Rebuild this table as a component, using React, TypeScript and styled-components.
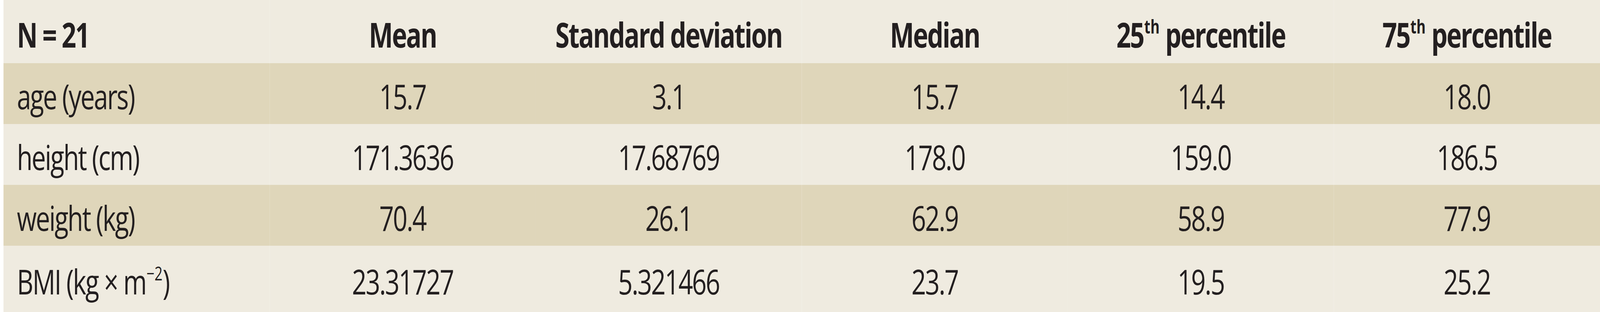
import { useEffect, useState } from "react";
import type { ReactNode } from "react";
import styled, { createGlobalStyle } from "styled-components";

// the table is drawn at this width and squeezed to fit narrower windows
const DESIGN_WIDTH = 5506;

const GlobalStyle = createGlobalStyle`
  html, body {
    margin: 0;
    padding: 0;
    background: #ffffff;
    overflow: hidden;
  }
`;

const Page = styled.div`
  width: ${DESIGN_WIDTH}px;
  height: 800px;
  padding-left: 12px;
  box-sizing: border-box;
  transform-origin: 0 0;
`;

const Table = styled.table`
  width: 100%;
  table-layout: fixed;
  border-collapse: collapse;
  font-family: "Open Sans", "Noto Sans", sans-serif;
  font-size: 88px;
  letter-spacing: -0.038em;
  color: #231f20;
`;

const HeadRow = styled.tr`
  height: 162px;
  background: #efebe0;
`;

const BodyRow = styled.tr<{ $shaded: boolean; $last?: boolean }>`
  height: ${({ $last }) => ($last ? "170px" : "156px")};
  background: ${({ $shaded }) => ($shaded ? "#dfd6ba" : "#efebe0")};
`;

const HeadCell = styled.th<{ $left?: boolean }>`
  font-weight: 700;
  text-align: ${({ $left }) => ($left ? "left" : "center")};
  padding: 14px 0 0 ${({ $left }) => ($left ? "46px" : "0")};
  vertical-align: middle;
  white-space: nowrap;
`;

const Cell = styled.td<{ $left?: boolean }>`
  font-weight: 400;
  text-align: ${({ $left }) => ($left ? "left" : "center")};
  padding: 12px 0 0 ${({ $left }) => ($left ? "46px" : "0")};
  vertical-align: middle;
  white-space: nowrap;
`;

const Sup = styled.sup`
  font-size: 0.55em;
  line-height: 0;
  vertical-align: 0.75em;
  margin-left: 2px;
  letter-spacing: 0;
`;

interface StatRow {
  label: ReactNode;
  values: string[];
}

const rows: StatRow[] = [
  { label: "age (years)", values: ["15.7", "3.1", "15.7", "14.4", "18.0"] },
  { label: "height (cm)", values: ["171.3636", "17.68769", "178.0", "159.0", "186.5"] },
  { label: "weight (kg)", values: ["70.4", "26.1", "62.9", "58.9", "77.9"] },
  {
    label: (
      <>
        BMI (kg × m<Sup>−2</Sup>)
      </>
    ),
    values: ["23.31727", "5.321466", "23.7", "19.5", "25.2"],
  },
];

const headers: ReactNode[] = [
  "Mean",
  "Standard deviation",
  "Median",
  <>
    25<Sup>th</Sup> percentile
  </>,
  <>
    75<Sup>th</Sup> percentile
  </>,
];

function fitScale() {
  return Math.min(1, window.innerWidth / DESIGN_WIDTH);
}

export default function App() {
  const [scale, setScale] = useState(fitScale);

  useEffect(() => {
    const onResize = () => setScale(fitScale());
    window.addEventListener("resize", onResize);
    return () => window.removeEventListener("resize", onResize);
  }, []);

  return (
    <Page style={{ transform: `scaleX(${scale})` }}>
      <GlobalStyle />
      <Table>
        <thead>
          <HeadRow>
            <HeadCell $left>N = 21</HeadCell>
            {headers.map((h, i) => (
              <HeadCell key={i}>{h}</HeadCell>
            ))}
          </HeadRow>
        </thead>
        <tbody>
          {rows.map((row, i) => (
            <BodyRow key={i} $shaded={i % 2 === 0} $last={i === rows.length - 1}>
              <Cell $left>{row.label}</Cell>
              {row.values.map((v, j) => (
                <Cell key={j}>{v}</Cell>
              ))}
            </BodyRow>
          ))}
        </tbody>
      </Table>
    </Page>
  );
}
